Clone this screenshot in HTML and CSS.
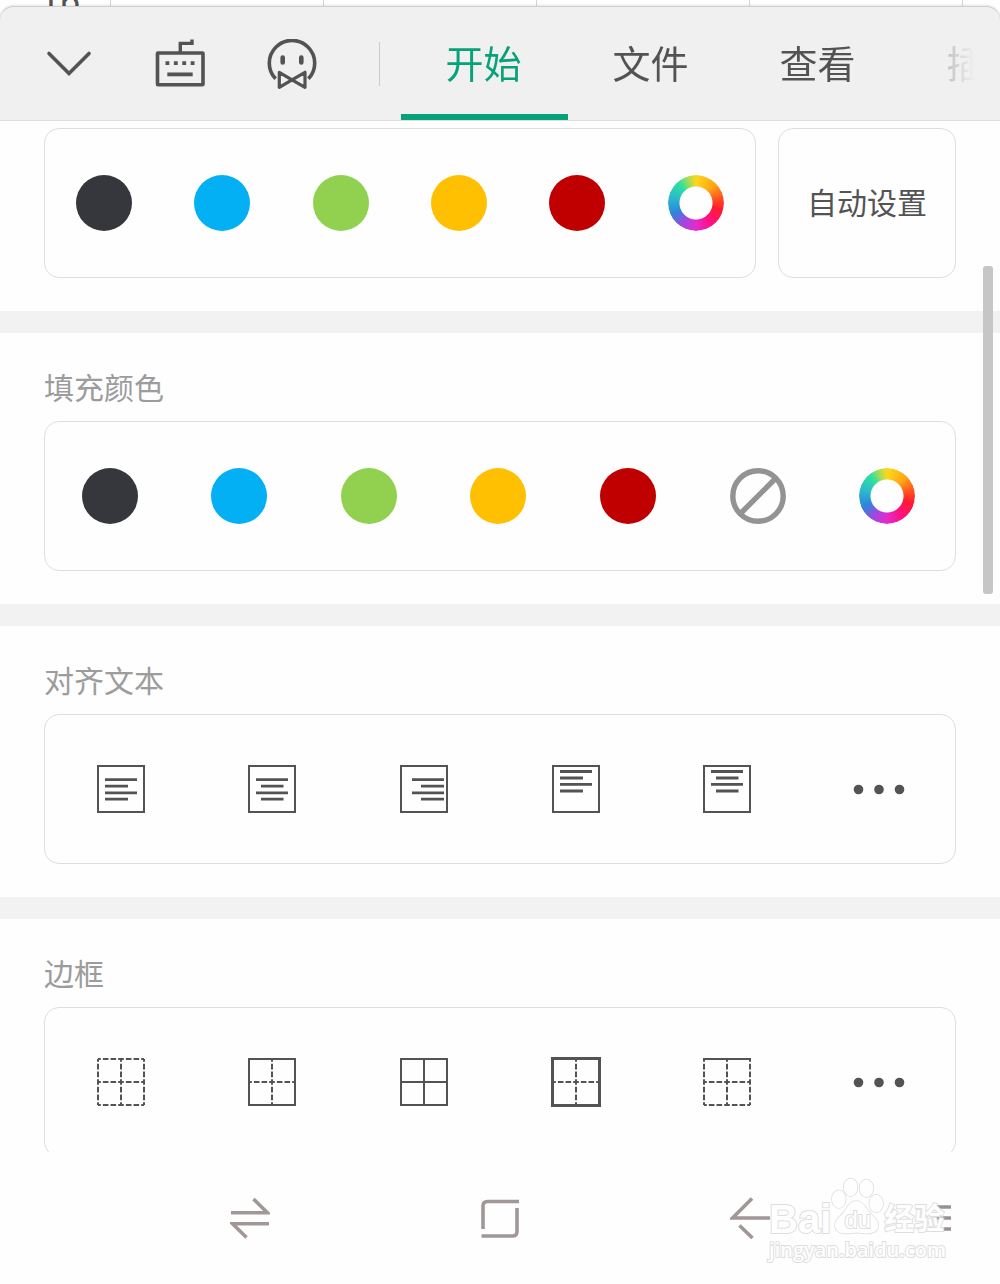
FILE: index.html
```html
<!DOCTYPE html>
<html lang="zh-CN">
<head>
    <meta charset="UTF-8">
    <meta name="viewport" content="width=device-width, initial-scale=1.0">
    <title>开始</title>
    <link rel="stylesheet" href="styles.css">
</head>
<body>
    <div class="sheet">
        <span class="row-number">16</span>
        <span></span>
        <span></span>
        <span></span>
        <span></span>
    </div>

    <header class="toolbar">
        <div class="tools">
            <button class="icon-btn" aria-label="收起">
                <svg width="50" height="50" viewBox="0 0 50 50"><path d="M6 14.5 L26 34.5 L46 14.5" stroke-width="3.6" stroke-linecap="round"/></svg>
            </button>
            <button class="icon-btn" aria-label="键盘">
                <svg width="50" height="50" viewBox="0 0 50 50">
                    <rect x="2.5" y="14" width="45.5" height="31.7" rx="0.5" stroke-width="3.6"/>
                    <path d="M25.3 13 V4.4 H37 V0.6" stroke-width="3.4"/>
                    <path d="M10.5 24.2 H39.5" stroke-width="3.8" stroke-dasharray="3.8 4.6"/>
                    <path d="M12.3 35.4 H37.7" stroke-width="3.8"/>
                </svg>
            </button>
            <button class="icon-btn" aria-label="助手">
                <svg width="50" height="50" viewBox="0 0 50 50">
                    <path d="M8.6 39.8 A22.7 22.7 0 1 1 41.4 39.8" stroke-width="3.6"/>
                    <path d="M15.7 18.6 V23.4 M34.3 18.6 V23.4" stroke-width="4.6" stroke-linecap="round"/>
                    <path d="M12.3 33.3 L25 40.8 L38 33.3 V48.3 L25 40.8 L12.3 48.3 Z" stroke-width="3.2" stroke-linejoin="round"/>
                </svg>
            </button>
        </div>
        <nav class="tabs">
            <a href="#start" class="tab active">开始</a>
            <a href="#file" class="tab">文件</a>
            <a href="#view" class="tab">查看</a>
            <a href="#insert" class="tab">插入</a>
        </nav>
    </header>

    <div class="panel">
        <main class="panel-content">
            <section class="section section-first">
                <div class="card-row">
                    <div class="card font-colors">
                        <button class="swatch dark" aria-label="黑色"></button>
                        <button class="swatch blue" aria-label="蓝色"></button>
                        <button class="swatch green" aria-label="绿色"></button>
                        <button class="swatch yellow" aria-label="黄色"></button>
                        <button class="swatch red" aria-label="红色"></button>
                        <button class="swatch wheel" aria-label="更多颜色"></button>
                    </div>
                    <button class="card auto-btn">自动设置</button>
                </div>
            </section>

            <section class="section">
                <h2>填充颜色</h2>
                <div class="card fill-colors">
                    <button class="swatch dark" aria-label="黑色"></button>
                    <button class="swatch blue" aria-label="蓝色"></button>
                    <button class="swatch green" aria-label="绿色"></button>
                    <button class="swatch yellow" aria-label="黄色"></button>
                    <button class="swatch red" aria-label="红色"></button>
                    <button class="swatch no-fill" aria-label="无填充">
                        <svg width="56" height="56" viewBox="0 0 56 56"><circle cx="28" cy="28" r="25.2"/><path d="M11 45 L45 11"/></svg>
                    </button>
                    <button class="swatch wheel" aria-label="更多颜色"></button>
                </div>
            </section>

            <section class="section">
                <h2>对齐文本</h2>
                <div class="card">
                    <button class="icon-btn" aria-label="左对齐">
                        <svg width="48" height="48" viewBox="0 0 48 48"><rect x="1" y="1" width="46" height="46" stroke-width="2"/><path d="M8 14.7 H40 M8 21.2 H31 M8 27.8 H40 M8 34.2 H31" stroke-width="2.8"/></svg>
                    </button>
                    <button class="icon-btn" aria-label="居中对齐">
                        <svg width="48" height="48" viewBox="0 0 48 48"><rect x="1" y="1" width="46" height="46" stroke-width="2"/><path d="M8 14.7 H40 M13 21.2 H35.5 M8 27.8 H40 M13 34.2 H35.5" stroke-width="2.8"/></svg>
                    </button>
                    <button class="icon-btn" aria-label="右对齐">
                        <svg width="48" height="48" viewBox="0 0 48 48"><rect x="1" y="1" width="46" height="46" stroke-width="2"/><path d="M12 14.7 H44 M21 21.2 H44 M12 27.8 H44 M21 34.2 H44" stroke-width="2.8"/></svg>
                    </button>
                    <button class="icon-btn" aria-label="左上对齐">
                        <svg width="48" height="48" viewBox="0 0 48 48"><rect x="1" y="1" width="46" height="46" stroke-width="2"/><path d="M8 6.5 H40 M8 13 H31 M8 19.4 H40 M8 26 H31" stroke-width="2.8"/></svg>
                    </button>
                    <button class="icon-btn" aria-label="顶部居中">
                        <svg width="48" height="48" viewBox="0 0 48 48"><rect x="1" y="1" width="46" height="46" stroke-width="2"/><path d="M8 6.5 H40 M13 13 H35.5 M8 19.4 H40 M13 26 H35.5" stroke-width="2.8"/></svg>
                    </button>
                    <button class="icon-btn more" aria-label="更多对齐">
                        <svg width="52" height="48" viewBox="0 0 52 48"><circle cx="5.5" cy="24.5" r="4.8"/><circle cx="26" cy="24.5" r="4.8"/><circle cx="46.5" cy="24.5" r="4.8"/></svg>
                    </button>
                </div>
            </section>

            <section class="section">
                <h2>边框</h2>
                <div class="card">
                    <button class="icon-btn" aria-label="无边框">
                        <svg class="grid-icon" width="48" height="48" viewBox="0 0 48 48"><path class="dash" d="M1 1 H47 M1 24 H47 M1 47 H47 M1 1 V47 M24 1 V47 M47 1 V47"/></svg>
                    </button>
                    <button class="icon-btn" aria-label="外侧边框">
                        <svg class="grid-icon" width="48" height="48" viewBox="0 0 48 48"><rect x="1" y="1" width="46" height="46"/><path class="dash" d="M1 24 H47 M24 1 V47"/></svg>
                    </button>
                    <button class="icon-btn" aria-label="所有边框">
                        <svg class="grid-icon" width="48" height="48" viewBox="0 0 48 48"><rect x="1" y="1" width="46" height="46"/><path d="M1 24 H47 M24 1 V47"/></svg>
                    </button>
                    <button class="icon-btn" aria-label="粗外侧边框">
                        <svg class="grid-icon" width="50" height="50" viewBox="-1 -1 50 50"><rect class="thick" x="0.5" y="0.5" width="47" height="47"/><path class="dash" d="M1 24 H47 M24 1 V47"/></svg>
                    </button>
                    <button class="icon-btn" aria-label="上边框">
                        <svg class="grid-icon" width="48" height="48" viewBox="0 0 48 48"><path d="M0 1 H48"/><path class="dash" d="M1 24 H47 M1 47 H47 M1 1 V47 M24 1 V47 M47 1 V47"/></svg>
                    </button>
                    <button class="icon-btn more" aria-label="更多边框">
                        <svg width="52" height="48" viewBox="0 0 52 48"><circle cx="5.5" cy="24.5" r="4.8"/><circle cx="26" cy="24.5" r="4.8"/><circle cx="46.5" cy="24.5" r="4.8"/></svg>
                    </button>
                </div>
            </section>
        </main>
        <div class="scroll-thumb"></div>
    </div>

    <footer class="system-nav">
        <button class="nav-btn" aria-label="切换">
            <svg width="40" height="42" viewBox="0 0 40 42"><path d="M1 15.8 H37.5 L23.5 2 M39 26.8 H2.5 L16.5 40.5"/></svg>
        </button>
        <button class="nav-btn" aria-label="主页">
            <svg width="40" height="42" viewBox="0 0 40 42"><path d="M39 4.5 H7.5 Q3 4.5 3 9 V32 M37 11 V34.5 Q37 39 32.5 39 H1.5"/></svg>
        </button>
        <button class="nav-btn" aria-label="返回">
            <svg width="40" height="42" viewBox="0 0 40 42"><path d="M22 1.5 L2.5 21 H40 M9.5 28.5 L22.5 41"/></svg>
        </button>
        <button class="nav-btn menu" aria-label="菜单">
            <svg width="26" height="42" viewBox="0 0 26 42"><path d="M12 10 H25 M12 21 H25 M12 32 H25" stroke-linecap="round"/></svg>
        </button>

        <div class="watermark">
            <div class="brand">
                <span class="brand-bai">Bai</span>
                <span class="paw">
                    <svg width="53" height="58" viewBox="0 0 54 58">
                        <ellipse cx="8" cy="22" rx="7" ry="9"/>
                        <ellipse cx="20" cy="10" rx="7" ry="9"/>
                        <ellipse cx="36" cy="11" rx="7" ry="9"/>
                        <ellipse cx="46" cy="26.5" rx="7" ry="9"/>
                        <path d="M26 24 C32 24 35 30 38 34 C42 39 49 43 48 50 C47 57 39 58 26 56 C13 58 5 57 4 49 C4 42 11 39 14 34 C17 29 20 24 26 24 Z"/>
                    </svg>
                    <span class="brand-du">du</span>
                </span>
                <span class="brand-cn">经验</span>
            </div>
            <div class="site">jingyan.baidu.com</div>
        </div>
    </footer>
</body>
</html>
```

FILE: styles.css
```css
:root {
    --accent: #07a27a;
    --ink: #535353;
    --muted: #9c9c9c;
    --line: #dedede;
    --bar: #f0f0f0;
    --gap: #f2f2f2;
    --nav: #a09796;
}

* {
    box-sizing: border-box;
}

body {
    margin: 0;
    height: 100vh;
    display: flex;
    flex-direction: column;
    overflow: hidden;
    background: #fefefe;
    color: var(--ink);
    font-family: "Noto Sans CJK SC", "Noto Sans", sans-serif;
}

button {
    margin: 0;
    padding: 0;
    border: none;
    background: none;
    color: inherit;
    font: inherit;
    cursor: pointer;
}

svg {
    display: block;
    fill: none;
    stroke: currentColor;
}

/* spreadsheet behind the panel */
.sheet {
    flex: none;
    height: 6px;
    display: grid;
    grid-template-columns: 111px repeat(4, 213px);
    overflow: hidden;
}

.sheet span {
    border-right: 1px solid #d5d5d5;
}

.sheet .row-number {
    padding-left: 10px;
    font-family: Roboto, sans-serif;
    font-size: 36px;
    line-height: 4px;
    text-align: center;
}

.toolbar {
    flex: none;
    height: 115px;
    display: flex;
    padding-left: 43px;
    background: var(--bar);
    border-top: 1px solid #cfcfcf;
    border-bottom: 1px solid var(--line);
    border-radius: 14px 14px 0 0;
    box-shadow: 0 0 3px rgba(0, 0, 0, 0.2);
}

.tools {
    flex: none;
    display: flex;
    align-items: center;
    gap: 62px;
}

.tools::after {
    content: "";
    width: 1px;
    height: 44px;
    background: #cccccc;
}

.tabs {
    flex: 1;
    min-width: 0;
    display: flex;
    margin: 0 20px 0 21px;
    overflow: hidden;
    mask-image: linear-gradient(to left, transparent 6px, #000 100px);
}

.tab {
    flex: none;
    width: 167px;
    padding: 2px 2px 0 0;
    display: flex;
    align-items: center;
    justify-content: center;
    border-bottom: 6px solid transparent;
    color: var(--ink);
    font-size: 38px;
    text-decoration: none;
}

.tab.active {
    color: var(--accent);
    border-color: var(--accent);
}

.panel {
    flex: 1;
    min-height: 0;
    position: relative;
    background: #fefefe;
}

.panel-content {
    height: 100%;
    overflow: hidden;
}

.scroll-thumb {
    position: absolute;
    top: 145px;
    right: 7px;
    width: 10px;
    height: 328px;
    border-radius: 3px;
    background: #c6c6c6;
}

.section {
    padding: 33px 44px;
    border-bottom: 22px solid var(--gap);
}

.section-first {
    padding-top: 7px;
}

h2 {
    margin: 0 0 15px;
    color: var(--muted);
    font-size: 30px;
    font-weight: 400;
    line-height: 40px;
}

.card-row {
    display: grid;
    grid-template-columns: 4fr 1fr;
    gap: 22px;
}

.card {
    height: 150px;
    display: grid;
    grid-auto-flow: column;
    grid-auto-columns: 1fr;
    align-items: center;
    justify-items: center;
    border: 1px solid var(--line);
    border-radius: 15px;
}

.fill-colors {
    padding-right: 3px;
}

.auto-btn {
    padding-bottom: 4px;
    font-size: 30px;
    white-space: nowrap;
}

.swatch {
    width: 56px;
    height: 56px;
    border-radius: 50%;
}

.dark { background: #36373c; }
.blue { background: #02b0f3; }
.green { background: #92d14f; }
.yellow { background: #ffc001; }
.red { background: #c00000; }

.wheel {
    background: conic-gradient(#fcd71c, #ffa716 45deg, #ff5a1c 75deg, #ff1a30 105deg, #ff1085 145deg, #e22bcf 180deg, #a645df 210deg, #2f84dc 245deg, #2bbcca 285deg, #2fe0a0 320deg, #b5dc4c 345deg, #fcd71c);
    mask-image: radial-gradient(circle, transparent 16px, #000 17px);
}

.no-fill {
    color: #939393;
}

.no-fill svg {
    stroke-width: 5.4;
}

.more svg {
    fill: currentColor;
    stroke: none;
}

.grid-icon {
    stroke-width: 2;
}

.grid-icon .dash {
    stroke-dasharray: 5.6 2.067;
    stroke-dashoffset: 2.8;
}

.grid-icon .thick {
    stroke-width: 3;
}

.system-nav {
    flex: none;
    height: 132px;
    position: relative;
    display: grid;
    grid-template-columns: 2fr 2fr 2fr 1fr;
    align-items: center;
    justify-items: center;
    padding-left: 12.5%;
    background: #fefefe;
}

.nav-btn {
    color: var(--nav);
}

.nav-btn svg {
    stroke-width: 3.6;
}

.menu {
    color: #969292;
}

/* site mark lying over the system bar */
.watermark {
    position: absolute;
    right: 54px;
    bottom: 19px;
    color: #fefefe;
    -webkit-text-stroke: 2px #dedede;
    paint-order: stroke fill;
    pointer-events: none;
}

.brand {
    display: flex;
    align-items: flex-end;
    height: 60px;
}

.brand-bai {
    font: bold 40px/32px "Liberation Sans", sans-serif;
}

.paw {
    position: relative;
}

.paw svg {
    fill: #fefefe;
    stroke: #dedede;
    stroke-width: 1.6;
}

.brand-du {
    position: absolute;
    left: 0;
    right: 0;
    bottom: 1px;
    font: 24px/28px "Liberation Sans", sans-serif;
    text-align: center;
}

.brand-cn {
    font-size: 30px;
    font-weight: 700;
    line-height: 38px;
}

.site {
    font: 600 20px/30px "Open Sans", sans-serif;
    text-align: center;
}
```
